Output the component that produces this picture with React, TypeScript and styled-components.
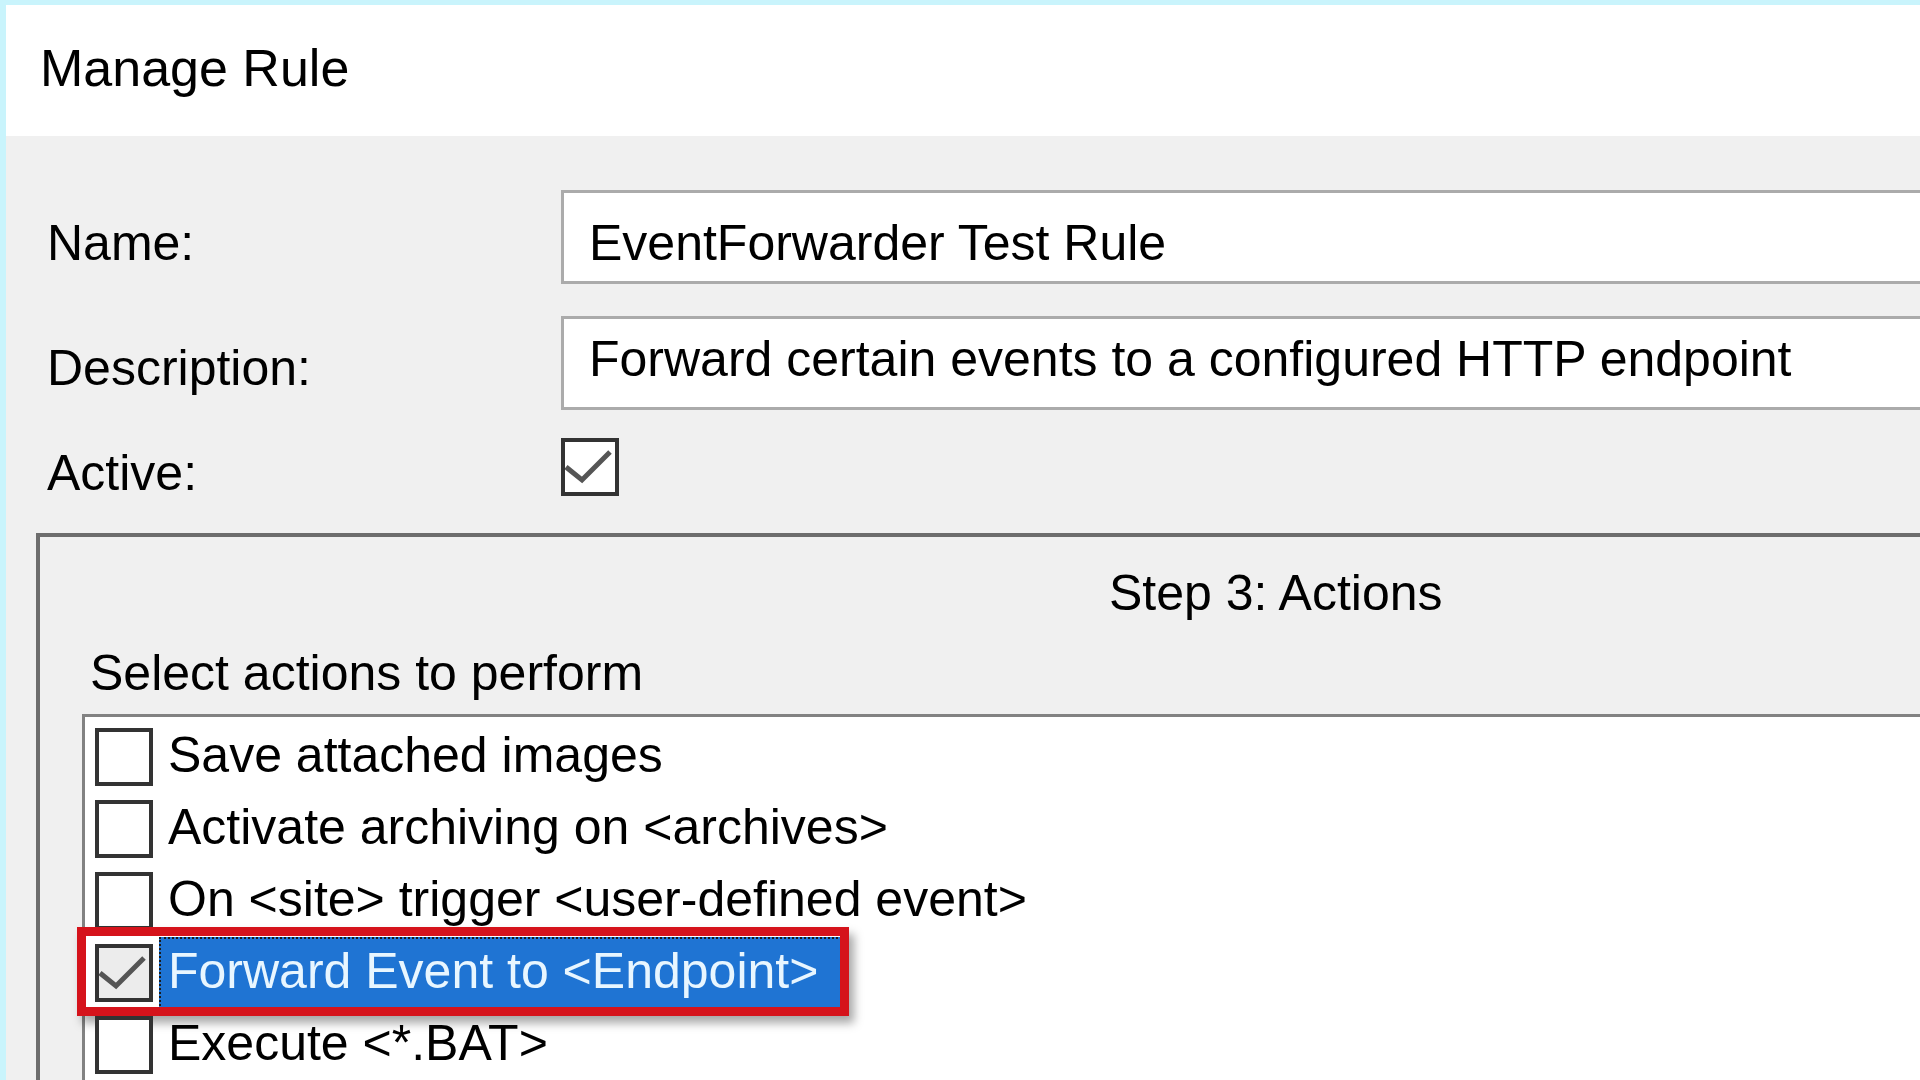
import React from "react";
import styled, { createGlobalStyle } from "styled-components";

const GlobalStyle = createGlobalStyle`
  html, body {
    margin: 0;
    padding: 0;
  }
  body {
    width: 1920px;
    height: 1080px;
    overflow: hidden;
    background: #c9f4fc;
    font-family: "Liberation Sans", Arial, sans-serif;
    color: #000;
  }
`;

const Frame = styled.div`
  width: 1920px;
  height: 1080px;
  box-sizing: border-box;
  padding: 5px 0 0 6px;
  overflow: hidden;
  background: #c9f4fc;
`;

const Dialog = styled.div`
  height: 100%;
  display: flex;
  flex-direction: column;
  background: #f0f0f0;
`;

const Header = styled.div`
  flex: none;
  height: 131px;
  box-sizing: border-box;
  padding: 33px 0 0 34px;
  background: #fff;
`;

const Title = styled.div`
  font-size: 52px;
  line-height: 60px;
`;

const Form = styled.div`
  flex: none;
  display: flex;
  flex-direction: column;
  padding: 54px 0 0 41px;
`;

const FieldRow = styled.div<{ $gap?: number }>`
  display: flex;
  align-items: flex-start;
  margin-top: ${(p) => p.$gap ?? 0}px;
`;

const Label = styled.div<{ $offset: number }>`
  width: 514px;
  flex: none;
  font-size: 50px;
  line-height: 56px;
  padding-top: ${(p) => p.$offset}px;
`;

const TextBox = styled.div<{ $pad: number }>`
  flex: 1;
  height: 94px;
  box-sizing: border-box;
  border: 3px solid #ababab;
  border-right: none;
  background: #fff;
  padding: ${(p) => p.$pad}px 0 0 25px;
  font-size: 50px;
  line-height: 56px;
  white-space: nowrap;
  overflow: hidden;
`;

const Box = styled.div<{ $tint?: boolean }>`
  width: 58px;
  height: 58px;
  flex: none;
  box-sizing: border-box;
  border: 4px solid #333;
  background: ${(p) => (p.$tint ? "#ececec" : "#fff")};
  display: flex;
  align-items: center;
  justify-content: center;
`;

const GroupBox = styled.div`
  flex: 1 0 auto;
  display: flex;
  flex-direction: column;
  margin: 32px 0 0 30px;
  padding-top: 28px;
  border: 4px solid #6d6d6d;
  border-right: none;
  border-bottom: none;
`;

const StepTitle = styled.div`
  font-size: 50px;
  line-height: 56px;
  padding-left: 1069px;
  white-space: nowrap;
`;

const Caption = styled.div`
  font-size: 50px;
  line-height: 56px;
  margin-top: 24px;
  padding-left: 50px;
`;

const ListBox = styled.div`
  flex: 1 0 auto;
  margin: 13px 0 0 42px;
  padding: 11px 0 0 10px;
  border: 3px solid #828282;
  border-right: none;
  border-bottom: none;
  background: #fff;
`;

const Item = styled.div`
  position: relative;
  display: flex;
  align-items: flex-start;
  gap: 6px;
  height: 72px;
`;

const ItemText = styled.div<{ $selected?: boolean }>`
  font-size: 50px;
  line-height: 56px;
  white-space: nowrap;
  ${(p) =>
    p.$selected
      ? `
    margin-top: -7px;
    padding: 4px 26px 9px 7px;
    border: 2px dotted #1b1b1b;
    background: #1f74d3;
    color: #e8f6ff;
  `
      : `
    margin-top: -1px;
    padding: 0 9px;
  `}
`;

const Highlight = styled.div`
  position: absolute;
  left: -18px;
  top: -17px;
  width: 772px;
  height: 89px;
  box-sizing: border-box;
  border: 9px solid #d5131b;
  box-shadow: 5px 7px 9px rgba(0, 0, 0, 0.35);
  pointer-events: none;
`;

function Check({ on }: { on: boolean }) {
  if (!on) return null;
  return (
    <svg width="50" height="50" viewBox="0 0 50 50">
      <polyline points="1,25 17,38 45,10" fill="none" stroke="#555" strokeWidth="5" strokeLinejoin="miter" />
    </svg>
  );
}

const actions = [
  { label: "Save attached images", checked: false },
  { label: "Activate archiving on <archives>", checked: false },
  { label: "On <site> trigger <user-defined event>", checked: false },
  { label: "Forward Event to <Endpoint>", checked: true, selected: true },
  { label: "Execute <*.BAT>", checked: false },
];

export default function App() {
  return (
    <>
      <GlobalStyle />
      <Frame>
        <Dialog>
          <Header>
            <Title>Manage Rule</Title>
          </Header>
          <Form>
            <FieldRow>
              <Label $offset={25}>Name:</Label>
              <TextBox $pad={22}>EventForwarder Test Rule</TextBox>
            </FieldRow>
            <FieldRow $gap={32}>
              <Label $offset={24}>Description:</Label>
              <TextBox $pad={12}>Forward certain events to a configured HTTP endpoint</TextBox>
            </FieldRow>
            <FieldRow $gap={28}>
              <Label $offset={7}>Active:</Label>
              <Box>
                <Check on />
              </Box>
            </FieldRow>
          </Form>
          <GroupBox>
            <StepTitle>Step 3: Actions</StepTitle>
            <Caption>Select actions to perform</Caption>
            <ListBox>
              {actions.map((a) => (
                <Item key={a.label}>
                  <Box $tint={a.selected}>
                    <Check on={a.checked} />
                  </Box>
                  <ItemText $selected={a.selected}>{a.label}</ItemText>
                  {a.selected && <Highlight />}
                </Item>
              ))}
            </ListBox>
          </GroupBox>
        </Dialog>
      </Frame>
    </>
  );
}
